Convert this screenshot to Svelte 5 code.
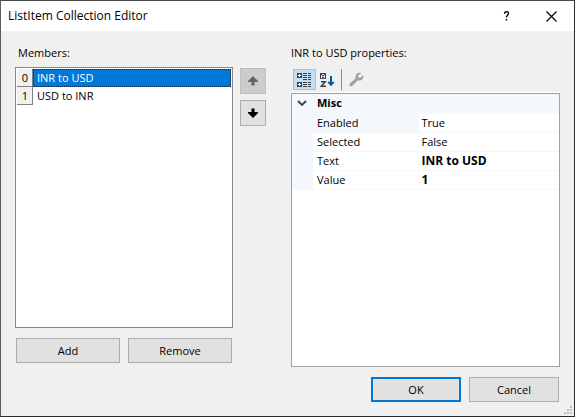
<script>
  let members = $state([
    { text: 'INR to USD', value: '1' },
    { text: 'USD to INR', value: '2' }
  ]);
  let selected = $state(0);
  let expanded = $state(true);

  const current = $derived(members[selected]);
  const properties = $derived(
    current
      ? [
          { name: 'Enabled', value: 'True' },
          { name: 'Selected', value: 'False' },
          { name: 'Text', value: current.text, changed: true },
          { name: 'Value', value: current.value, changed: true }
        ]
      : []
  );

  function add() {
    members.push({ text: 'ListItem', value: '' });
    selected = members.length - 1;
  }

  function remove() {
    members.splice(selected, 1);
    selected = Math.max(0, Math.min(selected, members.length - 1));
  }

  function move(step) {
    const target = selected + step;
    if (target < 0 || target >= members.length) return;
    const [item] = members.splice(selected, 1);
    members.splice(target, 0, item);
    selected = target;
  }

  function onKey(event) {
    if (event.key === 'ArrowDown') selected = Math.min(selected + 1, members.length - 1);
    if (event.key === 'ArrowUp') selected = Math.max(selected - 1, 0);
  }
</script>

<div class="window">
  <header>
    <h1>ListItem Collection Editor</h1>
    <button class="caption" aria-label="Help">
      <svg width="7" height="10" viewBox="0 0 7 10">
        <path d="M1.500 2.800C1.500 1.300 2.200.7 3.500.7S5.500 1.400 5.500 2.500C5.500 4.200 3.400 4.200 3.400 6.500" fill="none" stroke="#000" stroke-width="1.300" />
        <path d="M2.700 8h1.500v1.500H2.700z" />
      </svg>
    </button>
    <button class="caption" aria-label="Close">
      <svg width="11" height="11" viewBox="0 0 11 11">
        <path d="M.5.5l10 10M10.500.5l-10 10" stroke="#000" stroke-width="1.200" />
      </svg>
    </button>
  </header>

  <main>
    <section class="left">
      <h2 id="members-label">Members:</h2>
      <ul class="list" role="listbox" aria-labelledby="members-label" tabindex="0" onkeydown={onKey}>
        {#each members as member, i}
          <!-- svelte-ignore a11y_click_events_have_key_events -->
          <li role="option" aria-selected={i === selected} class:selected={i === selected} onclick={() => (selected = i)}>
            <span class="index">{i}</span>
            <span class="name">{member.text}</span>
          </li>
        {/each}
      </ul>
      <div class="actions">
        <button class="push" onclick={add}>Add</button>
        <button class="push" onclick={remove}>Remove</button>
      </div>
    </section>

    <div class="order">
      <button class="push arrow" aria-label="Move up" disabled={selected === 0} onclick={() => move(-1)}>
        <svg width="10" height="10" viewBox="0 0 10 10">
          <path d="M5 0L10 5V6H6.500V9.500H3.500V6H0V5z" fill="#646464" />
        </svg>
      </button>
      <button class="push arrow" aria-label="Move down" disabled={selected >= members.length - 1} onclick={() => move(1)}>
        <svg width="10" height="10" viewBox="0 0 10 10">
          <path d="M5 10L10 5V4H6.500V.5H3.500V4H0V5z" fill="#000" />
        </svg>
      </button>
    </div>

    <section class="right">
      <h2 id="props-label">{current ? current.text : ''} properties:</h2>
      <div class="toolbar" role="toolbar" aria-label="Property view">
        <button class="tool active" aria-label="Categorized" aria-pressed="true">
          <svg width="15" height="15" viewBox="0 0 15 15" shape-rendering="crispEdges">
            <path d="M0 1h5v5H0zM0 10h5v5H0z" fill="#424242" />
            <path d="M1 3h3v1H1zM2 2h1v3H2zM1 12h3v1H1zM2 11h1v3H2z" fill="#fff" />
            <path d="M6 1h4v1H6zM11 1h3v1h-3zM6 3h4v1H6zM11 3h3v1h-3zM6 5h4v1H6zM11 5h3v1h-3zM6 7h4v1H6zM11 7h3v1h-3zM6 10h4v1H6zM11 10h3v1h-3zM6 12h4v1H6zM11 12h3v1h-3zM6 14h4v1H6zM11 14h3v1h-3z" fill="#424242" />
          </svg>
        </button>
        <button class="tool" aria-label="Alphabetical">
          <svg width="15" height="15" viewBox="0 0 15 15">
            <path d="M0 1h6v6H0z" fill="#424242" />
            <path d="M1.500 6.300V3.500L3 2l1.500 1.500v2.800M1.500 4.700h3" fill="none" stroke="#fff" stroke-width=".9" />
            <path d="M1 9.750h4.200L1.200 14.250H6" fill="none" stroke="#424242" stroke-width="1.500" />
            <path d="M11 4v9M8.300 9.800l2.700 3 2.700-3" fill="none" stroke="#00609c" stroke-width="2" />
          </svg>
        </button>
        <span class="separator"></span>
        <button class="tool" aria-label="Property pages" disabled>
          <svg width="15" height="15" viewBox="0 0 16 16">
            <path d="M13.200 1.300C10.800.2 7.800 1.300 7 3.900c-.3 1-.2 1.900.1 2.700L1 12.200c-.9.900-.7 2 0 2.600.8.700 1.900.6 2.600-.2l5.700-5.700c2.200.8 4.700-.2 5.600-2.300.5-1.200.5-2.300.1-3.300L12.200 6 9.800 5.600 9.600 3.800z" fill="#a0a0a0" />
          </svg>
        </button>
      </div>
      <div class="grid">
        <table aria-labelledby="props-label">
          <colgroup>
            <col class="gutter-col" />
            <col class="name-col" />
            <col />
          </colgroup>
          <tbody>
            <tr class="category">
              <td class="gutter">
                <button class="chevron" aria-label="Toggle Misc" aria-expanded={expanded} onclick={() => (expanded = !expanded)}>
                  <svg width="10" height="8" viewBox="0 0 10 8">
                    <path d="M1 2l4 4 4-4" fill="none" stroke="#404040" stroke-width="1.800" />
                  </svg>
                </button>
              </td>
              <th colspan="2">Misc</th>
            </tr>
            {#if expanded}
              {#each properties as property, i}
                <tr>
                  <td class="gutter"></td>
                  <th class="key" class:focused={i === 0} scope="row">{property.name}</th>
                  <td class="value" class:changed={property.changed}>{property.value}</td>
                </tr>
              {/each}
            {/if}
          </tbody>
        </table>
      </div>
    </section>
  </main>

  <footer>
    <button class="push default">OK</button>
    <button class="push">Cancel</button>
    <svg class="grip" width="8" height="8" viewBox="0 0 8 8" shape-rendering="crispEdges" aria-hidden="true">
      <path d="M6 0h2v2H6zM3 3h2v2H3zM6 3h2v2H6zM0 6h2v2H0zM3 6h2v2H3zM6 6h2v2H6z" fill="#bfbfbf" />
    </svg>
  </footer>
</div>

<style>
  .window {
    box-sizing: border-box;
    min-height: 100vh;
    display: flex;
    flex-direction: column;
    border: 1px solid #2b2b2d;
    border-top-color: #4a4a4c;
    border-left-color: #5c5c5e;
    background: #f0f0f0;
    color: #000;
    font: 11px/16px 'Segoe UI', 'Open Sans', 'Noto Sans', sans-serif;
  }
  header {
    display: flex;
    align-items: center;
    height: 30px;
    padding-left: 7px;
    background: #fff;
  }
  h1,
  h2 {
    margin: 0;
    font-size: 11px;
    font-weight: 400;
  }
  h1 {
    flex: 1;
    font-size: 12px;
  }
  button {
    box-sizing: border-box;
    margin: 0;
    padding: 0;
    border: 0;
    background: none;
    color: inherit;
    font: inherit;
    display: flex;
    align-items: center;
    justify-content: center;
  }
  .caption {
    width: 45px;
    height: 30px;
  }
  main {
    flex: 1;
    display: flex;
    padding: 14px 14px 0;
  }
  .left,
  .right {
    min-width: 0;
    display: flex;
    flex-direction: column;
  }
  .left {
    flex: 218 1 0;
    padding-bottom: 4px;
  }
  .left h2 {
    padding-left: 3px;
  }
  .list {
    flex: 1;
    margin: 6px 0 10px;
    padding: 1px;
    border: 1px solid #828790;
    background: #fff;
    list-style: none;
    outline: none;
  }
  li {
    display: flex;
    height: 18px;
    line-height: 18px;
  }
  .index {
    box-sizing: border-box;
    width: 16px;
    padding-left: 1px;
    border-right: 1px solid #808080;
    border-bottom: 1px solid #808080;
    background: #f0f0f0;
    text-align: center;
  }
  .name {
    flex: 1;
    box-sizing: border-box;
    padding: 0 3px;
    border: 1px solid transparent;
    line-height: 16px;
  }
  .selected .name {
    border: 1px dotted #002a55;
    background: #0078d7;
    color: #fff;
  }
  .actions {
    display: flex;
    gap: 8px;
    padding: 0 1px;
  }
  .push {
    height: 25px;
    border: 1px solid #adadad;
    background: #e1e1e1;
  }
  .push:hover:enabled {
    border-color: #0078d7;
    background: #e5f1fb;
  }
  .push:disabled {
    border-color: #bfbfbf;
    background: #ccc;
  }
  .actions .push {
    flex: 1;
  }
  .order {
    display: flex;
    flex-direction: column;
    gap: 6px;
    padding: 23px 25px 0 7px;
  }
  .arrow {
    width: 26px;
    height: 26px;
  }
  .right {
    flex: 269 1 0;
  }
  .toolbar {
    display: flex;
    margin-top: 8px;
    padding: 0 2px 2px;
    border-bottom: 1px solid #fff;
  }
  .tool {
    width: 23px;
    height: 21px;
  }
  .tool.active {
    border: 1px solid #90c8f6;
    background: #c2def5;
  }
  .separator {
    width: 1px;
    margin: 0 3px 0 2px;
    background: #8c8c8c;
  }
  .grid {
    flex: 1;
    border: 1px solid #a0a0a0;
    background: #fff;
  }
  table {
    width: 100%;
    border-collapse: collapse;
    table-layout: fixed;
  }
  .gutter-col {
    width: 21px;
  }
  .name-col {
    width: 105px;
  }
  td,
  th {
    box-sizing: border-box;
    height: 19px;
    padding: 0 4px;
    border-bottom: 1px solid #f4f7fc;
    line-height: 18px;
    font-weight: 400;
    text-align: left;
  }
  .category th {
    font-weight: 700;
  }
  .gutter,
  .category th,
  .focused {
    background: #f4f7fc;
  }
  .gutter {
    padding: 0;
  }
  .key {
    border-right: 1px solid #f4f7fc;
  }
  .value {
    padding: 0 3px;
  }
  .changed {
    font-size: 12px;
    font-weight: 700;
  }
  .chevron {
    width: 20px;
    height: 18px;
  }
  footer {
    position: relative;
    display: flex;
    justify-content: flex-end;
    gap: 8px;
    padding: 10px 15px 14px;
  }
  footer .push {
    width: 90px;
  }
  .default {
    border: 2px solid #0078d7;
  }
  .grip {
    position: absolute;
    right: 2px;
    bottom: 2px;
  }
</style>
